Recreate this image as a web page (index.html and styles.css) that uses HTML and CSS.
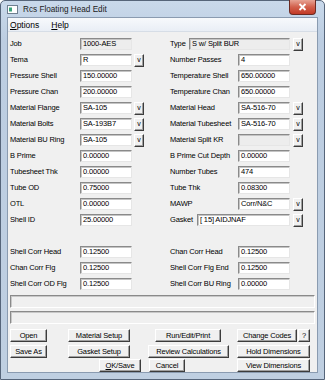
FILE: index.html
```html
<!DOCTYPE html>
<html lang="en">
<head>
  <meta charset="UTF-8" />
  <title>Rcs Floating Head Edit</title>
  <link rel="stylesheet" href="styles.css">
</head>
<body>
  <div class="window">
    <div class="titlebar">
      <svg class="app-icon" width="11" height="9" viewBox="0 0 11 9">
        <rect x="0.5" y="0.5" width="10" height="8" fill="#fff" stroke="#6f7f90"/>
        <rect x="2" y="2.5" width="3" height="4" fill="#3aa37a"/>
      </svg>
      <span class="title">Rcs Floating Head Edit</span>
      <div class="close">
        <svg width="9" height="8" viewBox="0 0 9 8">
          <path d="M1.5 1 L7.5 7 M7.5 1 L1.5 7" stroke="#fff" stroke-width="1.8"/>
        </svg>
      </div>
    </div>

    <div class="client">
      <div class="menubar">
        <span><u>O</u>ptions</span>
        <span><u>H</u>elp</span>
      </div>

      <div class="form">
        <div class="grid">
          <div class="field"><label>Job</label><div class="box gray">1000-AES</div></div>
          <div class="field right short"><label>Type</label><div class="box gray wide">S w/ Split BUR</div><div class="drop">v</div></div>

          <div class="field"><label>Tema</label><div class="box">R</div><div class="drop">v</div></div>
          <div class="field right"><label>Number Passes</label><div class="box">4</div></div>

          <div class="field"><label>Pressure Shell</label><div class="box">150.00000</div></div>
          <div class="field right"><label>Temperature Shell</label><div class="box">650.00000</div></div>

          <div class="field"><label>Pressure Chan</label><div class="box">200.00000</div></div>
          <div class="field right"><label>Temperature Chan</label><div class="box">650.00000</div></div>

          <div class="field"><label>Material Flange</label><div class="box">SA-105</div><div class="drop">v</div></div>
          <div class="field right"><label>Material Head</label><div class="box">SA-516-70</div><div class="drop">v</div></div>

          <div class="field"><label>Material Bolts</label><div class="box">SA-193B7</div><div class="drop">v</div></div>
          <div class="field right"><label>Material Tubesheet</label><div class="box">SA-516-70</div><div class="drop">v</div></div>

          <div class="field"><label>Material BU Ring</label><div class="box">SA-105</div><div class="drop">v</div></div>
          <div class="field right"><label>Material Split KR</label><div class="box gray"></div><div class="drop">v</div></div>

          <div class="field"><label>B Prime</label><div class="box">0.00000</div></div>
          <div class="field right"><label>B Prime Cut Depth</label><div class="box">0.00000</div></div>

          <div class="field"><label>Tubesheet Thk</label><div class="box">0.00000</div></div>
          <div class="field right"><label>Number Tubes</label><div class="box">474</div></div>

          <div class="field"><label>Tube OD</label><div class="box">0.75000</div></div>
          <div class="field right"><label>Tube Thk</label><div class="box">0.08300</div></div>

          <div class="field"><label>OTL</label><div class="box">0.00000</div></div>
          <div class="field right"><label>MAWP</label><div class="box">Corr/N&amp;C</div><div class="drop">v</div></div>

          <div class="field"><label>Shell ID</label><div class="box">25.00000</div></div>
          <div class="field right gasket"><label>Gasket</label><div class="box wide">[ 15] AIDJNAF</div><div class="drop">v</div></div>

          <div class="field"></div>
          <div class="field"></div>

          <div class="field"><label>Shell Corr Head</label><div class="box">0.12500</div></div>
          <div class="field right"><label>Chan Corr Head</label><div class="box">0.12500</div></div>

          <div class="field"><label>Chan Corr Flg</label><div class="box">0.12500</div></div>
          <div class="field right"><label>Shell Corr Flg End</label><div class="box">0.12500</div></div>

          <div class="field"><label>Shell Corr OD Flg</label><div class="box">0.12500</div></div>
          <div class="field right"><label>Shell Corr BU Ring</label><div class="box">0.00000</div></div>
        </div>

        <div class="status"></div>
        <div class="status"></div>

        <div class="buttons">
          <div class="row row1">
            <button class="b-open">Open</button>
            <button class="b-mat">Material Setup</button>
            <button class="b-run">Run/Edit/Print</button>
            <button class="b-codes">Change Codes</button>
            <button class="b-help">?</button>
          </div>
          <div class="row row2">
            <button class="b-open">Save As</button>
            <button class="b-mat">Gasket Setup</button>
            <button class="b-review">Review Calculations</button>
            <button class="b-dims">Hold Dimensions</button>
          </div>
          <div class="row row3">
            <button class="b-ok"><u>O</u>K/Save</button>
            <button class="b-cancel">Cancel</button>
            <button class="b-dims">View Dimensions</button>
          </div>
        </div>
      </div>
    </div>
  </div>
</body>
</html>
```

FILE: styles.css
```css
body {
  margin: 0;
  font-family: "Liberation Sans", Arial, sans-serif;
  color: #000;
}
.window {
  width: 325px;
  height: 380px;
  box-sizing: border-box;
  border: 1px solid #56657a;
  border-radius: 5px 5px 0 0;
  background: linear-gradient(#c9d9eb, #bccde1 40px, #bfcfe1);
  padding: 0 6px 6px;
  display: flex;
  flex-direction: column;
}
.titlebar {
  height: 17px;
  display: flex;
  align-items: center;
  position: relative;
}
.app-icon { margin: 0 5px 0 0; }
.title {
  font-size: 8.2px;
  color: #1b1b1b;
}
.close {
  position: absolute;
  right: 2px;
  top: -1px;
  width: 27px;
  height: 15px;
  box-sizing: border-box;
  border: 1px solid #6b2a22;
  border-top: none;
  border-radius: 0 0 4px 4px;
  background: linear-gradient(#e7a394, #d2604c 50%, #c23a26);
  display: flex;
  align-items: center;
  justify-content: center;
}
.client {
  flex: 1;
  border: 1px solid #8a9bb0;
  background: #f0f0f0;
  display: flex;
  flex-direction: column;
}
.menubar {
  height: 13px;
  border-bottom: 1px solid #d6dde6;
  background: linear-gradient(#f7f9fc, #e9eef5);
  display: flex;
  align-items: center;
  gap: 12px;
  padding-left: 2px;
  font-size: 8.5px;
}
.form {
  padding: 4px 2px 0 2px;
  font-size: 7.5px;
  letter-spacing: -0.15px;
}
.grid {
  display: grid;
  grid-template-columns: 160px 1fr;
  grid-auto-rows: 16px;
}
.field {
  display: flex;
  align-items: flex-start;
  padding-top: 2px;
}
.field label {
  width: 70px;
  line-height: 12px;
  flex-shrink: 0;
}
.field.right label { width: 68px; }
.field.short label { width: 19px; }
.field.gasket label { width: 27px; }
.box {
  width: 52px;
  height: 12px;
  box-sizing: border-box;
  background: #fff;
  border: 1px solid;
  border-color: #8a8a8a #e6e6e6 #e6e6e6 #8a8a8a;
  box-shadow: inset 1px 1px 0 #c4c4c4;
  padding-left: 2px;
  line-height: 10px;
  white-space: nowrap;
  overflow: hidden;
}
.box.gray { background: #ededed; }
.box.wide { width: auto; flex: 0 0 auto; }
.field.short .box.wide { width: 101px; }
.field.gasket .box.wide { width: 93px; }
.drop {
  width: 10px;
  height: 13px;
  box-sizing: border-box;
  margin-left: 2px;
  border: 1px solid;
  border-color: #fff #3c3c3c #3c3c3c #fff;
  box-shadow: inset -1px -1px 0 #a0a0a0;
  background: #f0f0f0;
  font-size: 7px;
  line-height: 10px;
  text-align: center;
}
.field.right .drop { margin-left: 3px; }
.status {
  height: 13px;
  margin-top: 3px;
  box-sizing: border-box;
  border: 1px solid;
  border-color: #8a8a8a #fff #fff #8a8a8a;
  box-shadow: inset 1px 1px 0 #c8c8c8;
}
.status:first-of-type { margin-top: 0; }
.buttons {
  margin-top: 5px;
  display: flex;
  flex-direction: column;
  gap: 2px;
}
.row { display: flex; }
.row1 { margin-bottom: 1px; }
.row2 { margin-bottom: -1px; }
button {
  height: 13px;
  padding: 0;
  box-sizing: border-box;
  font-family: inherit;
  font-size: 7.5px;
  letter-spacing: -0.15px;
  color: #000;
  background: #f0f0f0;
  border: 1px solid;
  border-color: #fff #3c3c3c #3c3c3c #fff;
  box-shadow: inset -1px -1px 0 #a0a0a0;
  line-height: 10px;
}
.b-open { width: 37px; }
.b-mat { width: 62px; margin-left: 21px; }
.b-run { width: 66px; margin-left: 25px; }
.b-codes { width: 60px; margin-left: 16px; }
.b-help { width: 12px; margin-left: 1px; }
.b-review { width: 81px; margin-left: 18px; }
.b-dims { width: 73px; margin-left: 8px; }
.b-ok { width: 42px; margin-left: 89px; }
.b-cancel { width: 36px; margin-left: 8px; }
.row3 .b-dims { margin-left: 52px; }
```
